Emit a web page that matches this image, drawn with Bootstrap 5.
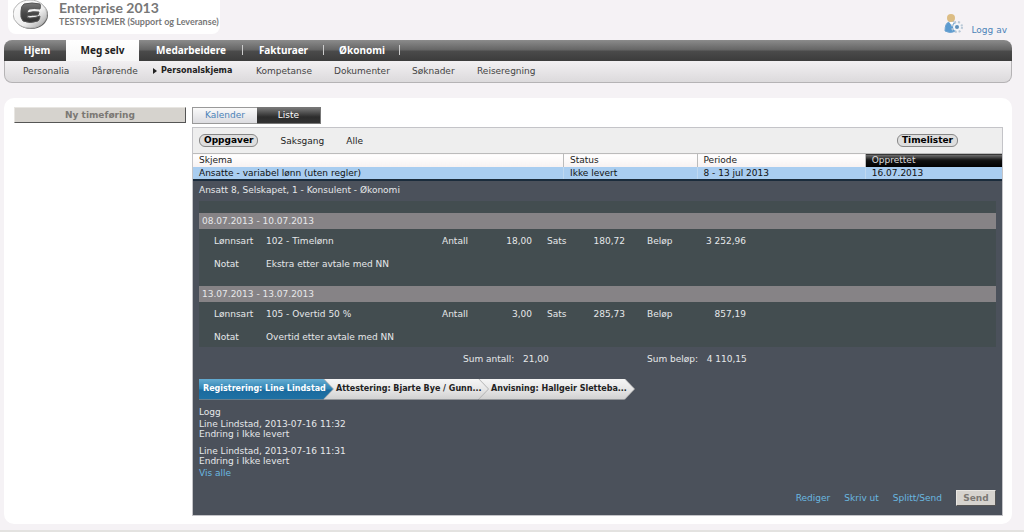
<!DOCTYPE html>
<html lang="nb">
<head>
<meta charset="utf-8">
<meta name="viewport" content="width=device-width, initial-scale=1">
<title>Enterprise 2013 - Personalskjema</title>
<link href="https://cdn.jsdelivr.net/npm/bootstrap@5.3.0/dist/css/bootstrap.min.css" rel="stylesheet">
<style>
body{font:9px/12px "DejaVu Sans",Verdana,sans-serif;color:#222;background:#f5f2f5}
a{text-decoration:none}
button{font-family:inherit}
.page-shell{padding:0 12px 6px 4px}
.masthead{margin-bottom:6px}
.brand{height:34px;width:212px;background:#fff;border-radius:0 0 8px 8px;padding-left:5px;color:#777}
.brand svg{flex:none}
.brand-title{font:bold 14px/16px Lato,sans-serif}
.brand-sub{font:bold 9px/11px Lato,sans-serif;white-space:nowrap}
.logout{padding-right:5px}
.logout a{color:#4c83b8;line-height:8px}
.topnav{border-radius:8px 8px 0 0;height:21px;background:linear-gradient(#8b8b8b,#646464 48%,#4b4b4b 52%,#3c3c3c);overflow:hidden}
.topnav a{color:#fff;font:bold 10px/20px "Noto Sans",sans-serif;position:relative;text-align:center}
.topnav a.current{background:linear-gradient(#fff,#f7f7f7);color:#222}
.topnav a.sep::after{content:"";position:absolute;right:0;top:5px;height:10px;border-right:1px solid #ccc}
.subnav{height:22px;border:1px solid #b5b3b5;border-top:0;border-radius:0 0 8px 8px;background:linear-gradient(#f2f0f2,#dcdadc);line-height:20px;padding-left:18px}
.subnav a{color:#444}
.subnav a.current{font-weight:bold;font-size:8px;color:#222}
.sheet{margin-top:15px;background:#fff;border-radius:10px;padding:9px 9px 8px 10px}
.side{width:172px;margin-right:6px}
.btn-classic{background:#d6d3ce;border:1px solid;border-color:#e8e6e2 #555 #555 #e8e6e2;color:#7b7874;font-weight:bold;font-size:9px;line-height:14px;padding:0}
.btn-send{width:40px}
.tab{width:65px;height:17px;border:1px solid #999;border-width:1px 0 1px 1px;background:linear-gradient(#fafafa,#dcdce0);color:#4c83b8;padding:0;line-height:15px}
.tab.current{width:64px;border:1px solid #777;border-left:0;background:linear-gradient(#777,#2c2c2c 60%,#333);color:#fff}
.list-panel{border:1px solid #c4c4c8;margin-top:3px}
.filters{background:#eee;height:25px;padding:0 44px 0 6px}
.filters button{border:0;background:none;padding:0;line-height:12px;color:#222}
.filters button.pill{border:1px solid #888;border-radius:6px;background:#dedede;font-weight:bold;padding:0 4px;line-height:11px;color:#000}
.filters .plain{margin-left:22px}
.forms{table-layout:fixed;width:100%}
.forms th{font-weight:normal;height:13px;padding:0 6px;line-height:12px;background:linear-gradient(#fff,#f7f1f1);border:1px solid #bbb;border-width:1px 0 0 1px}
.forms th:first-child,.forms td:first-child{border-left:0}
.forms th.sorted{background:linear-gradient(#777,#111 45%,#000);color:#ddd}
.forms td{padding:0 6px;line-height:12px;background:#a9cdf0;border-left:1px solid #bfd8f0;border-bottom:2px solid #1b2c3c;color:#111}
.detail{background:#4b515b;color:#e6e8ea;padding:3px 6px 9px}
.detail a{color:#6ab8e0}
.entries{background:#434d50;margin-top:5px;padding:12px 0 4px}
.period{background:#868386;line-height:16px;padding-left:3px;margin:0;font-size:9px;font-weight:normal}
.lines{table-layout:fixed;width:100%;margin:6px 0 16px}
.lines th,.lines td{font-weight:normal;padding:0;line-height:12px;white-space:nowrap}
.lines tr + tr td,.lines tr + tr th{padding-top:11px}
.lines th:first-child{padding-left:15px}
.lines.last{margin-bottom:0}
.w-a{width:67px}.w-b{width:176px}.w-c{width:50px}.w-d{width:40px}.w-e{width:48px}.w-f{width:45px}.w-g{width:75px}.w-h{width:46px}
.lines th.l-sats{padding-left:15px}.lines th.l-bel{padding-left:22px}
.sums{padding:6px 0 0 264px}
.sums div:first-child{width:184px}
.steps{margin-top:14px;height:21px}
.steps li{height:21px;margin-right:-10px;clip-path:polygon(0 0,calc(100% - 10px) 0,100% 50%,calc(100% - 10px) 100%,0 100%);background:#b4b4b4;font-size:8px;line-height:20px;color:#222;font-weight:bold;white-space:nowrap;position:relative}
.steps li span{display:block;height:21px;margin-right:1px;background:linear-gradient(#f5f5f5,#e6e6e6 50%,#cfcfcf);clip-path:polygon(0 0,calc(100% - 10px) 0,100% 50%,calc(100% - 10px) 100%,0 100%);padding-left:12px}
.steps li.done{width:135px;z-index:3;color:#fff}
.steps li.done span{background:linear-gradient(#64acd2,#2f83b3 48%,#1a6a9e 52%,#1f72a5);padding-left:4px}
.steps li.second{width:165px;z-index:2}
.steps li.third{width:156px;z-index:1}
.log{margin-top:6px;line-height:10px}
.log p{margin:0 0 7px}
.log p:last-of-type{margin-bottom:2px}
.log h2{font:inherit;line-height:12px;margin:0 0 1px}
.actions{margin-top:12px;gap:14px}
.footer-line{height:3px;background:#e3e2e0}
</style>
</head>
<body>
<div class="page-shell">
  <header class="masthead d-flex justify-content-between">
    <div class="brand d-flex ms-1">
      <svg width="38" height="34" viewBox="0 0 38 34" aria-hidden="true">
        <defs><linearGradient id="disc" x1="0" y1="0" x2="1" y2="1"><stop offset="0" stop-color="#fff"/><stop offset=".6" stop-color="#eee"/><stop offset="1" stop-color="#999"/></linearGradient>
        <linearGradient id="ink" x1="0" y1="0" x2="0" y2="1"><stop offset="0" stop-color="#777"/><stop offset=".5" stop-color="#4a4a4a"/><stop offset="1" stop-color="#333"/></linearGradient></defs>
        <ellipse cx="18" cy="15" rx="17" ry="14" fill="#666"/>
        <ellipse cx="17" cy="14" rx="17" ry="14" fill="url(#disc)" stroke="#b5b5b5"/>
        <path d="M11 4Q19 2 27 4Q28 6 27 9Q21 8 16 9Q14 11 14 13Q20 11 26 12L25 15Q19 15 14 16Q14 18 17 18Q22 18 27 16Q27 19 25 21Q17 24 10 21Q7 18 8 11Q8 6 11 4Z" fill="url(#ink)" stroke="#555"/>
      </svg>
      <div class="ps-2"><div class="brand-title">Enterprise 2013</div><div class="brand-sub">TESTSYSTEMER (Support og Leveranse)</div></div>
    </div>
    <div class="logout d-flex align-items-end gap-2">
      <svg width="20" height="20" viewBox="0 0 20 20" aria-hidden="true">
        <path d="M1 17Q1 9 5 8L10 8Q13 10 12 17Q6 20 1 17Z" fill="#5b9bd0" stroke="#6da3d0"/>
        <path d="M5 8L8 12L10 8Z" fill="#fff"/>
        <circle cx="7" cy="4" r="4" fill="#dcbd84"/>
        <circle cx="13" cy="13" r="4" fill="#f2f5f8"/>
        <circle cx="13" cy="13" r="5" fill="none" stroke="#b9c8d6" stroke-width="2" stroke-dasharray="2 2"/>
        <circle cx="13" cy="13" r="2" fill="#5f8fb9"/>
      </svg>
      <a href="#">Logg av</a>
    </div>
  </header>
  <nav aria-label="Hovedmeny">
    <div class="topnav d-flex">
      <a href="#" style="width:62px" class="ps-1">Hjem</a>
      <a href="#" class="current" style="width:73px">Meg selv</a>
      <a href="#" class="sep" style="width:104px">Medarbeidere</a>
      <a href="#" class="sep" style="width:81px">Fakturaer</a>
      <a href="#" class="sep" style="width:76px">Økonomi</a>
    </div>
    <div class="subnav d-flex">
      <a href="#" style="width:69px">Personalia</a>
      <a href="#" style="width:61px">Pårørende</a>
      <a href="#" class="current" style="width:103px"><svg width="4" height="6" viewBox="0 0 4 6" class="me-1" aria-hidden="true"><path d="M0 0L4 3L0 6Z" fill="#222"/></svg>Personalskjema</a>
      <a href="#" style="width:78px">Kompetanse</a>
      <a href="#" style="width:78px">Dokumenter</a>
      <a href="#" style="width:65px">Søknader</a>
      <a href="#">Reiseregning</a>
    </div>
  </nav>
  <main class="sheet d-flex">
    <aside class="side flex-shrink-0"><button type="button" class="btn-classic w-100">Ny timeføring</button></aside>
    <section class="flex-grow-1">
      <div class="d-flex"><button type="button" class="tab">Kalender</button><button type="button" class="tab current">Liste</button></div>
      <div class="list-panel">
        <div class="filters d-flex align-items-center">
          <button type="button" class="pill">Oppgaver</button>
          <button type="button" class="plain">Saksgang</button>
          <button type="button" class="plain">Alle</button>
          <button type="button" class="pill ms-auto">Timelister</button>
        </div>
        <table class="forms">
          <colgroup><col style="width:45.8%"><col style="width:16.5%"><col style="width:20.8%"><col></colgroup>
          <thead><tr><th>Skjema</th><th>Status</th><th>Periode</th><th class="sorted">Opprettet</th></tr></thead>
          <tbody><tr><td>Ansatte - variabel lønn (uten regler)</td><td>Ikke levert</td><td>8 - 13 jul 2013</td><td>16.07.2013</td></tr></tbody>
        </table>
        <div class="detail">
          <div>Ansatt 8, Selskapet, 1 - Konsulent - Økonomi</div>
          <div class="entries">
            <h2 class="period">08.07.2013 - 10.07.2013</h2>
            <table class="lines">
              <colgroup><col class="w-a"><col class="w-b"><col class="w-c"><col class="w-d"><col class="w-e"><col class="w-f"><col class="w-g"><col class="w-h"><col></colgroup>
              <tr><th>Lønnsart</th><td>102 - Timelønn</td><th>Antall</th><td class="text-end">18,00</td><th class="l-sats">Sats</th><td class="text-end">180,72</td><th class="l-bel">Beløp</th><td class="text-end">3 252,96</td><td></td></tr>
              <tr><th>Notat</th><td colspan="8">Ekstra etter avtale med NN</td></tr>
            </table>
            <h2 class="period">13.07.2013 - 13.07.2013</h2>
            <table class="lines last">
              <colgroup><col class="w-a"><col class="w-b"><col class="w-c"><col class="w-d"><col class="w-e"><col class="w-f"><col class="w-g"><col class="w-h"><col></colgroup>
              <tr><th>Lønnsart</th><td>105 - Overtid 50 %</td><th>Antall</th><td class="text-end">3,00</td><th class="l-sats">Sats</th><td class="text-end">285,73</td><th class="l-bel">Beløp</th><td class="text-end">857,19</td><td></td></tr>
              <tr><th>Notat</th><td colspan="8">Overtid etter avtale med NN</td></tr>
            </table>
          </div>
          <div class="sums d-flex"><div>Sum antall:&nbsp;&nbsp; 21,00</div><div>Sum beløp:&nbsp;&nbsp; 4 110,15</div></div>
          <ol class="steps list-unstyled d-flex mb-0">
            <li class="done"><span>Registrering: Line Lindstad</span></li>
            <li class="second"><span>Attestering: Bjarte Bye / Gunn...</span></li>
            <li class="third"><span>Anvisning: Hallgeir Sletteba...</span></li>
          </ol>
          <div class="log">
            <h2>Logg</h2>
            <p>Line Lindstad, 2013-07-16 11:32<br>Endring i Ikke levert</p>
            <p>Line Lindstad, 2013-07-16 11:31<br>Endring i Ikke levert</p>
            <a href="#">Vis alle</a>
          </div>
          <div class="actions d-flex justify-content-end align-items-center">
            <a href="#">Rediger</a><a href="#">Skriv ut</a><a href="#">Splitt/Send</a>
            <button type="button" class="btn-classic btn-send">Send</button>
          </div>
        </div>
      </div>
    </section>
  </main>
</div>
<div class="footer-line"></div>
<script src="https://cdn.jsdelivr.net/npm/bootstrap@5.3.0/dist/js/bootstrap.bundle.min.js"></script>
</body>
</html>
